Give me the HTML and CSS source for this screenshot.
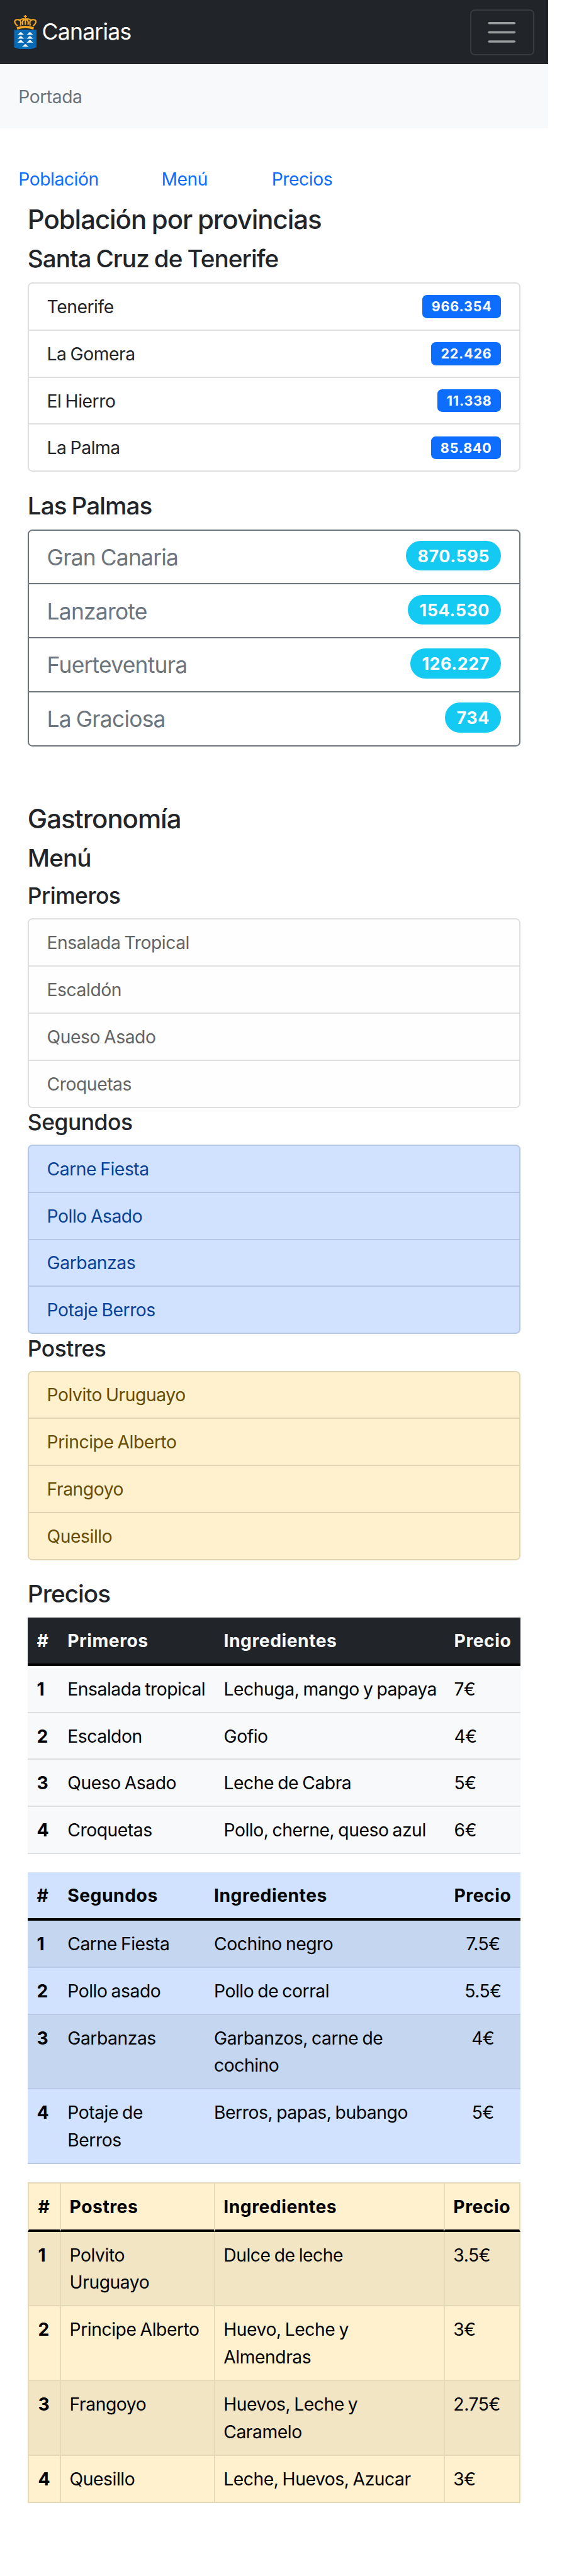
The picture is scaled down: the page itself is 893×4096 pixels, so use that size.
FILE: index.html
```html
<!DOCTYPE html>
<html lang="es">
<head>
<meta charset="utf-8">
<title>Canarias</title>
<link rel="stylesheet" href="styles.css">
</head>
<body>
<div class="page">
  <header class="navbar">
    <a class="brand">
      <svg class="brand-logo" viewBox="0 0 40 60">
        <g fill="none" stroke="#f7a823" stroke-width="2.4">
          <path d="M20 0v6M17.2 2.4h5.6" stroke-width="1.8"/>
          <path d="M6.5 19C-1.5 12 1 7.500 7.500 8C12 8.500 13 12 11.500 18"/>
          <path d="M33.500 19C41.500 12 39 7.500 32.500 8C28 8.500 27 12 28.500 18"/>
          <path d="M9.500 9.500C12 6.500 17 6 20 7.500C23 6 28 6.500 30.500 9.500"/>
          <path d="M15.500 17C13.500 12 16 7.500 20 7.500C24 7.500 26.500 12 24.500 17M20 7v10"/>
          <path d="M5.500 23.200Q20 18.300 34.500 23.200" stroke-width="4"/>
        </g>
        <path fill="#066ab5" d="M.5 25.700h39v30.500Q31 60 20 60T.5 56.200z"/>
        <g fill="#fff">
          <path id="isle" d="M6 34.300Q8.500 33.300 9.800 31Q12 28.800 14.200 31Q15.500 33.300 18 34.300z"/>
          <use href="#isle" x="16"/>
          <use href="#isle" y="6.800"/>
          <use href="#isle" x="16" y="6.800"/>
          <use href="#isle" y="13.600"/>
          <use href="#isle" x="16" y="13.600"/>
          <use href="#isle" x="8" y="20.800"/>
        </g>
      </svg>
      <span>Canarias</span>
    </a>
    <button class="toggler" aria-label="Menú">
      <svg viewBox="0 0 60 60"><path d="M8 14h44M8 30h44M8 46h44" fill="none" stroke="#999c9d" stroke-width="4" stroke-linecap="round"/></svg>
    </button>
  </header>
  <div class="crumb">Portada</div>
  <nav class="links"><a>Población</a><a>Menú</a><a>Precios</a></nav>

  <main class="content">
    <h3>Población por provincias</h3>
    <h4>Santa Cruz de Tenerife</h4>
    <ul class="list">
      <li>Tenerife<span class="badge">966.354</span></li>
      <li>La Gomera<span class="badge">22.426</span></li>
      <li>El Hierro<span class="badge">11.338</span></li>
      <li>La Palma<span class="badge">85.840</span></li>
    </ul>
    <h4 class="spaced">Las Palmas</h4>
    <ul class="list list-large">
      <li>Gran Canaria<span class="badge pill">870.595</span></li>
      <li>Lanzarote<span class="badge pill">154.530</span></li>
      <li>Fuerteventura<span class="badge pill">126.227</span></li>
      <li>La Graciosa<span class="badge pill">734</span></li>
    </ul>

    <h3 class="section">Gastronomía</h3>
    <h4>Menú</h4>
    <h5>Primeros</h5>
    <ul class="list list-light">
      <li>Ensalada Tropical</li><li>Escaldón</li><li>Queso Asado</li><li>Croquetas</li>
    </ul>
    <h5>Segundos</h5>
    <ul class="list list-primary">
      <li>Carne Fiesta</li><li>Pollo Asado</li><li>Garbanzas</li><li>Potaje Berros</li>
    </ul>
    <h5>Postres</h5>
    <ul class="list list-warning">
      <li>Polvito Uruguayo</li><li>Principe Alberto</li><li>Frangoyo</li><li>Quesillo</li>
    </ul>

    <h4 class="spaced">Precios</h4>
    <table class="table table-first">
      <colgroup><col class="c1"><col class="c2"><col class="c3"><col></colgroup>
      <thead><tr><th>#</th><th>Primeros</th><th>Ingredientes</th><th>Precio</th></tr></thead>
      <tbody>
        <tr><th>1</th><td>Ensalada tropical</td><td>Lechuga, mango y papaya</td><td>7€</td></tr>
        <tr><th>2</th><td>Escaldon</td><td>Gofio</td><td>4€</td></tr>
        <tr><th>3</th><td>Queso Asado</td><td>Leche de Cabra</td><td>5€</td></tr>
        <tr><th>4</th><td>Croquetas</td><td>Pollo, cherne, queso azul</td><td>6€</td></tr>
      </tbody>
    </table>
    <table class="table table-second striped">
      <colgroup><col class="c1"><col class="c2"><col class="c3"><col></colgroup>
      <thead><tr><th>#</th><th>Segundos</th><th>Ingredientes</th><th>Precio</th></tr></thead>
      <tbody>
        <tr><th>1</th><td>Carne Fiesta</td><td>Cochino negro</td><td>7.5€</td></tr>
        <tr><th>2</th><td>Pollo asado</td><td>Pollo de corral</td><td>5.5€</td></tr>
        <tr class="tall"><th>3</th><td>Garbanzas</td><td>Garbanzos, carne de<br>cochino</td><td>4€</td></tr>
        <tr class="tall"><th>4</th><td>Potaje de<br>Berros</td><td>Berros, papas, bubango</td><td>5€</td></tr>
      </tbody>
    </table>
    <table class="table table-third striped">
      <colgroup><col class="c1"><col class="c2"><col class="c3"><col></colgroup>
      <thead><tr><th>#</th><th>Postres</th><th>Ingredientes</th><th>Precio</th></tr></thead>
      <tbody>
        <tr class="tall"><th>1</th><td>Polvito<br>Uruguayo</td><td>Dulce de leche</td><td>3.5€</td></tr>
        <tr class="tall"><th>2</th><td>Principe Alberto</td><td>Huevo, Leche y<br>Almendras</td><td>3€</td></tr>
        <tr class="tall"><th>3</th><td>Frangoyo</td><td>Huevos, Leche y<br>Caramelo</td><td>2.75€</td></tr>
        <tr><th>4</th><td>Quesillo</td><td>Leche, Huevos, Azucar</td><td>3€</td></tr>
      </tbody>
    </table>
  </main>
</div>
</body>
</html>
```
FILE: styles.css
```css
:root { --u: 0.9128px; }
* { box-sizing: border-box; margin: 0; padding: 0; }
body {
  background: #fff;
  color: #212529;
  font-family: Inter, "Liberation Sans", sans-serif;
  font-size: calc(31 * var(--u));
  line-height: calc(48 * var(--u));
  letter-spacing: -0.016em;
  word-spacing: -0.05em;
}
.page { width: calc(954 * var(--u)); height: 4096px; }

.navbar {
  display: flex;
  align-items: center;
  justify-content: space-between;
  height: calc(112 * var(--u));
  padding: 0 calc(24 * var(--u));
  background: #212529;
}
.brand {
  display: flex;
  align-items: center;
  gap: calc(9 * var(--u));
  color: #fff;
  font-size: calc(39 * var(--u));
  letter-spacing: -0.0225em;
}
.brand-logo { width: calc(40 * var(--u)); height: calc(60 * var(--u)); }
.toggler {
  display: flex;
  align-items: center;
  justify-content: center;
  width: calc(112 * var(--u));
  height: calc(80 * var(--u));
  border: 2px solid #383b3f;
  border-radius: calc(8 * var(--u));
  background: none;
}
.toggler svg { width: calc(60 * var(--u)); height: calc(60 * var(--u)); }
.crumb {
  height: calc(112 * var(--u));
  padding: calc(33.5 * var(--u)) calc(32 * var(--u));
  background: #f8f9fb;
  color: #6c757d;
}
.links {
  display: grid;
  grid-template-columns: calc(249 * var(--u)) calc(192 * var(--u)) auto;
  height: calc(128 * var(--u));
  padding: calc(65.5 * var(--u)) 0 0 calc(32 * var(--u));
  color: #0c6dff;
}

.content { padding: 0 calc(48 * var(--u)); }
h3, h4, h5 {
  padding-top: calc(1.5 * var(--u));
  margin-bottom: calc(14.5 * var(--u));
  font-weight: 500;
}
h3 {
  font-size: calc(46 * var(--u));
  line-height: calc(56 * var(--u));
  letter-spacing: -0.025em;
}
h4 {
  font-size: calc(42.4 * var(--u));
  line-height: calc(52 * var(--u));
  letter-spacing: -0.025em;
}
h5 {
  font-size: calc(38.8 * var(--u));
  line-height: calc(48 * var(--u));
  letter-spacing: -0.0136em;
}
.spaced { margin-top: calc(32 * var(--u)); }
.section { margin-top: calc(96 * var(--u)); }

.list {
  --line: #dfdfdf;
  display: flex;
  flex-direction: column;
  height: calc(330 * var(--u));
  border: 2px solid var(--line);
  border-radius: calc(8 * var(--u));
  overflow: hidden;
  list-style: none;
}
.list li {
  flex: 1;
  display: flex;
  align-items: center;
  justify-content: space-between;
  padding: calc(3 * var(--u)) calc(32 * var(--u)) 0 calc(31.5 * var(--u));
}
.list li + li { border-top: 2px solid var(--line); }
.list-large {
  --line: #6c757d;
  height: calc(378 * var(--u));
  color: #6c757d;
  font-size: calc(38.8 * var(--u));
  letter-spacing: -0.022em;
}
.list-light { background: #fefefe; color: #636464; }
.list-primary { --line: #b5c6e4; background: #d0e2ff; color: #084298; }
.list-warning { --line: #e0d5b2; background: #fff1ce; color: #664d03; }

.badge {
  height: calc(40 * var(--u));
  margin-bottom: calc(3 * var(--u));
  padding: 0 calc(15.5 * var(--u)) 0 calc(16.5 * var(--u));
  border-radius: calc(8 * var(--u));
  background: #0c6dff;
  color: #fff;
  font-size: calc(23.5 * var(--u));
  font-weight: 700;
  line-height: calc(40 * var(--u));
  letter-spacing: 0.04em;
}
.badge.pill {
  height: calc(52 * var(--u));
  margin-bottom: calc(7 * var(--u));
  padding: 0 calc(19.5 * var(--u)) 0 calc(20 * var(--u));
  border-radius: calc(26 * var(--u));
  background: #14caf2;
  font-size: calc(29.5 * var(--u));
  line-height: calc(54 * var(--u));
  letter-spacing: 0.02em;
}

.table {
  width: calc(858 * var(--u));
  margin-bottom: calc(32 * var(--u));
  border-collapse: separate;
  border-spacing: 0;
  table-layout: fixed;
  background: var(--bg);
  color: #000;
}
.table th, .table td {
  height: calc(82 * var(--u));
  padding: calc(17.5 * var(--u)) 0 0 calc(17.5 * var(--u));
  border-bottom: 2px solid var(--line);
  text-align: left;
  vertical-align: top;
  white-space: nowrap;
}
.table th { font-weight: 700; letter-spacing: 0.018em; }
.table th:first-child { padding-left: calc(16 * var(--u)); }
.table thead th { height: calc(84 * var(--u)); border-bottom: 4px solid #000; }
.table .tall th, .table .tall td { height: calc(130 * var(--u)); }
.striped tbody tr:nth-child(odd) { background: var(--stripe); }

.table-first { --bg: #f8f9fb; --line: #dedfe1; }
.table-first thead { background: #212529; color: #f8f9fb; }
.table-first .c1, .table-second .c1 { width: calc(52 * var(--u)); }
.table-first .c2 { width: calc(272 * var(--u)); }
.table-first .c3 { width: calc(401 * var(--u)); }

.table-second { --bg: #d0e2ff; --stripe: #c5d6f1; --line: #b9c9e6; }
.table-second .c2 { width: calc(255 * var(--u)); }
.table-second .c3 { width: calc(418 * var(--u)); }
.table-second td:last-child { padding-right: calc(15 * var(--u)); text-align: center; }

.table-third { --bg: #fff1ce; --stripe: #f2e5c4; --line: #e5dab8; }
.table-third thead th { height: calc(86 * var(--u)); border-top: 2px solid var(--line); }
.table-third th, .table-third td { border-left: 2px solid var(--line); padding-left: calc(15 * var(--u)); }
.table-third th:last-child, .table-third td:last-child { border-right: 2px solid var(--line); }
.table-third .c1 { width: calc(56 * var(--u)); }
.table-third .c2 { width: calc(268 * var(--u)); }
.table-third .c3 { width: calc(400 * var(--u)); }
```
